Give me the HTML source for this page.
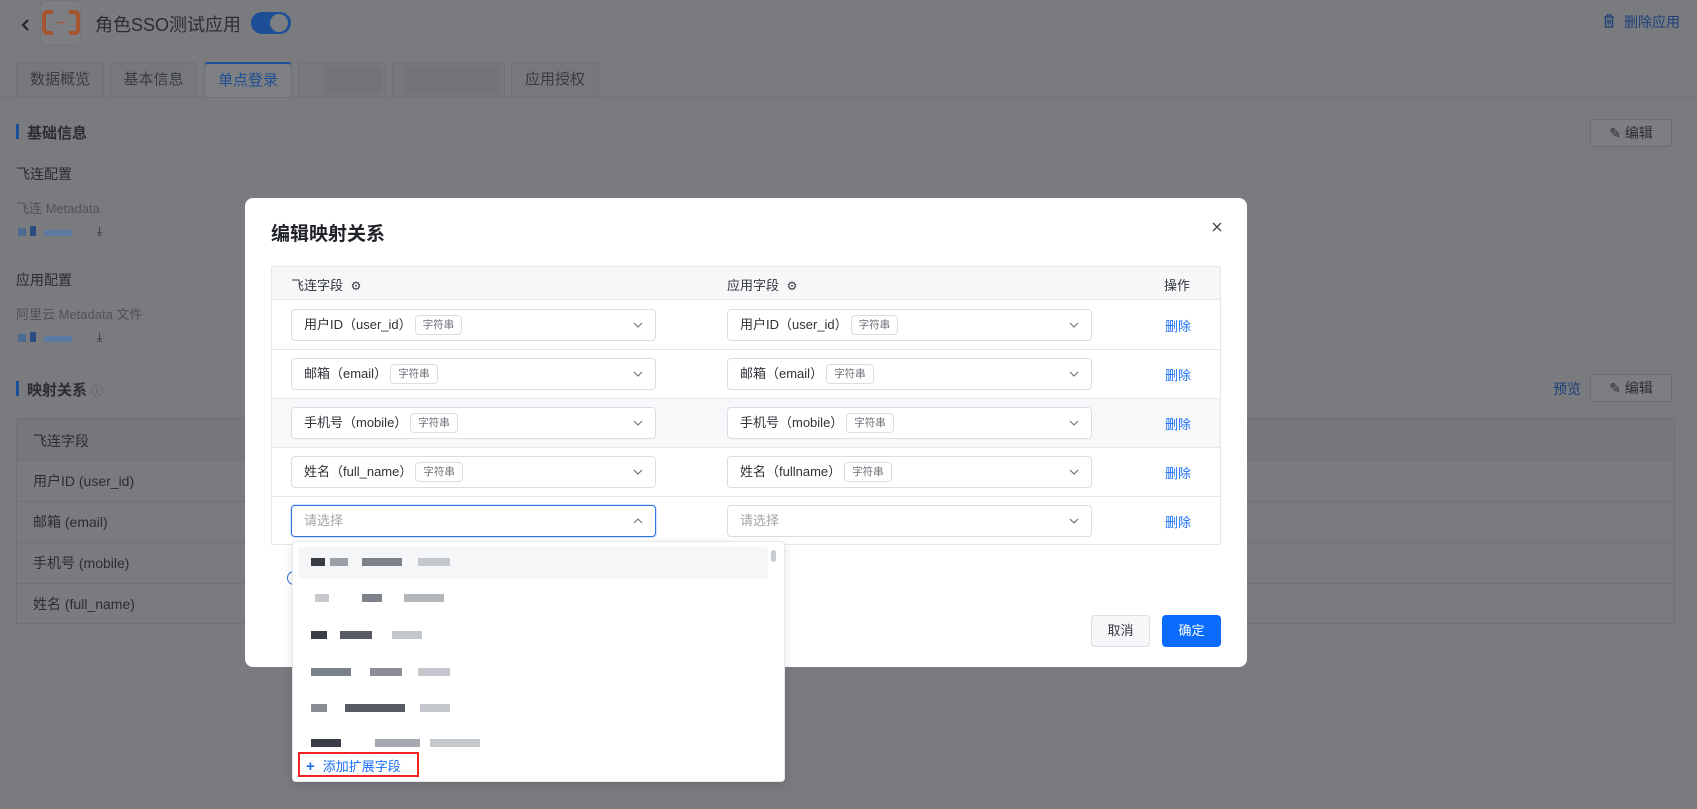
<!DOCTYPE html>
<html><head><meta charset="utf-8"><style>
*{box-sizing:border-box;margin:0;padding:0}
body{width:1697px;height:809px;position:relative;overflow:hidden;background:#797b7f;font-family:"Liberation Sans","Noto Sans CJK SC",sans-serif;color:#33363b}
.a{position:absolute}
.bg{color:#2b2d31}
.tab{position:absolute;top:62px;height:35px;border:1px solid #6f7175;border-bottom:none;border-radius:4px 4px 0 0;background:#76787c;font-size:15px;color:#3a3c40;text-align:center;line-height:34px}
.btnbg{position:absolute;border:1px solid #6a6c70;border-radius:3px;font-size:14px;color:#2b2d31;text-align:center;line-height:26px;background:#7c7e82}
.modal{position:absolute;left:245px;top:198px;width:1002px;height:469px;background:#fff;border-radius:8px}
.sel{position:absolute;height:32px;border:1px solid #dadde3;border-radius:4px;background:#fff;font-size:13px;color:#2f3237;padding-left:12px;line-height:30px}
.tag{display:inline-block;border:1px solid #dadde3;border-radius:4px;font-size:10.5px;color:#6b6f76;height:20px;line-height:18px;padding:0 7px;margin-left:3px;vertical-align:1px}
.sel svg{position:absolute;right:12px;top:11px}
.del{position:absolute;font-size:13px;color:#1a6ef5}
.ph{color:#a0a4aa}
.blk{position:absolute;height:8px;background:#9a9ea6}
.d{background:#3a3d45}
</style></head><body>
<svg class="a" style="left:21px;top:18px" width="10" height="14"><path d="M7 2 L2 7 L7 12" stroke="#222" stroke-width="2" fill="none"/></svg>
<div class="a" style="left:40px;top:0;width:41px;height:46px;border-radius:6px;background:#7c7e82;border:1px solid #727478"></div>
<svg class="a" style="left:42px;top:10px" width="38" height="25"><path d="M11 2 H6 Q2 2 2 6 V19 Q2 23 6 23 H11 M27 2 H32 Q36 2 36 6 V19 Q36 23 32 23 H27" stroke="#a4552f" stroke-width="4" fill="none"/><path d="M15 12.5 H23" stroke="#a4552f" stroke-width="1.5"/></svg>
<div class="a bg" style="left:95px;top:11px;font-size:18px">角色SSO测试应用</div>
<div class="a" style="left:251px;top:12px;width:40px;height:22px;border-radius:11px;background:#1d4f96"></div>
<div class="a" style="left:270px;top:14px;width:18px;height:18px;border-radius:9px;background:#7c7e82"></div>
<svg class="a" style="left:1603px;top:14px" width="12" height="14"><path d="M1 3 H11 M4 3 V1 H8 V3 M2.5 3 V13 H9.5 V3 M5 5.5 V10.5 M7 5.5 V10.5" stroke="#1d3f7a" stroke-width="1.3" fill="none"/></svg>
<div class="a" style="left:1624px;top:12px;font-size:14px;color:#1d3f7a">删除应用</div>
<div class="tab" style="left:16px;width:88px">数据概览</div>
<div class="tab" style="left:110px;width:87px">基本信息</div>
<div class="tab" style="left:204px;width:88px;background:#7d7f83;border-top:2px solid #1d4f96;color:#1d4f96;height:36px">单点登录</div>
<div class="tab" style="left:298px;width:88px"><div class="a" style="left:25px;top:3px;width:58px;height:28px;background:#727478"></div></div>
<div class="tab" style="left:392px;width:113px"><div class="a" style="left:12px;top:3px;width:95px;height:28px;background:#727478"></div></div>
<div class="tab" style="left:511px;width:88px">应用授权</div>
<div class="a" style="left:0;top:97px;width:1697px;height:1px;background:#6f7175"></div>

<div class="a" style="left:16px;top:124px;width:3px;height:15px;background:#1d4f96"></div>
<div class="a bg" style="left:27px;top:122px;font-size:15px;font-weight:bold">基础信息</div>
<div class="btnbg" style="left:1590px;top:119px;width:82px;height:28px">✎ 编辑</div>
<div class="a bg" style="left:16px;top:164px;font-size:14px">飞连配置</div>
<div class="a" style="left:16px;top:198px;font-size:13px;color:#505256">飞连 Metadata</div>
<div class="a" style="left:18px;top:228px;width:8px;height:8px;background:#4d6a93"></div><div class="a" style="left:30px;top:226px;width:6px;height:10px;background:#2b4c80"></div><div class="a" style="left:44px;top:230px;width:28px;height:6px;background:#5d7aa3"></div>
<div class="a" style="left:97px;top:224px;font-size:12px;color:#2b2d31">⤓</div>
<div class="a bg" style="left:16px;top:270px;font-size:14px">应用配置</div>
<div class="a" style="left:16px;top:304px;font-size:13px;color:#505256">阿里云 Metadata 文件</div>
<div class="a" style="left:18px;top:334px;width:8px;height:8px;background:#4d6a93"></div><div class="a" style="left:30px;top:332px;width:6px;height:10px;background:#2b4c80"></div><div class="a" style="left:44px;top:336px;width:28px;height:6px;background:#5d7aa3"></div>
<div class="a" style="left:97px;top:330px;font-size:12px;color:#2b2d31">⤓</div>

<div class="a" style="left:16px;top:381px;width:3px;height:15px;background:#1d4f96"></div>
<div class="a bg" style="left:27px;top:379px;font-size:15px;font-weight:bold">映射关系 <span style="font-size:12px;color:#505256;font-weight:normal">ⓘ</span></div>
<div class="a" style="left:1553px;top:379px;font-size:14px;color:#1d3f7a">预览</div>
<div class="btnbg" style="left:1590px;top:374px;width:82px;height:28px">✎ 编辑</div>
<div class="a" style="left:16px;top:418px;width:1659px;height:206px;border:1px solid #6f7175"></div>
<div class="a" style="left:17px;top:419px;width:1657px;height:41px;background:#75777b"></div>
<div class="a" style="left:17px;top:460px;width:1657px;height:1px;background:#6f7175"></div>
<div class="a" style="left:17px;top:501px;width:1657px;height:1px;background:#6f7175"></div>
<div class="a" style="left:17px;top:542px;width:1657px;height:1px;background:#6f7175"></div>
<div class="a" style="left:17px;top:583px;width:1657px;height:1px;background:#6f7175"></div>
<div class="a bg" style="left:33px;top:431px;font-size:14px">飞连字段</div>
<div class="a bg" style="left:33px;top:471px;font-size:14px">用户ID (user_id)</div>
<div class="a bg" style="left:33px;top:512px;font-size:14px">邮箱 (email)</div>
<div class="a bg" style="left:33px;top:553px;font-size:14px">手机号 (mobile)</div>
<div class="a bg" style="left:33px;top:594px;font-size:14px">姓名 (full_name)</div>

<div class="modal">
<div class="a" style="left:26px;top:21px;font-size:19px;color:#1f2226;font-weight:bold">编辑映射关系</div>
<svg class="a" style="left:967px;top:24px" width="10" height="10"><path d="M1 1 L9 9 M9 1 L1 9" stroke="#444" stroke-width="1.3"/></svg>
<div class="a" style="left:26px;top:68px;width:950px;height:279px;border:1px solid #e6e8ec"></div>
<div class="a" style="left:27px;top:69px;width:948px;height:33px;background:#f6f7f9;border-bottom:1px solid #e6e8ec"></div>
<div class="a" style="left:46px;top:77px;font-size:13px;color:#33363b">飞连字段 <span style="font-size:12px;margin-left:4px">⚙</span></div>
<div class="a" style="left:482px;top:77px;font-size:13px;color:#33363b">应用字段 <span style="font-size:12px;margin-left:4px">⚙</span></div>
<div class="a" style="left:919px;top:77px;font-size:13px;color:#33363b">操作</div>
<div class="a" style="left:27px;top:151px;width:948px;height:1px;background:#e6e8ec"></div>
<div class="a" style="left:27px;top:200px;width:948px;height:50px;background:#f7f8fa;border-top:1px solid #e6e8ec;border-bottom:1px solid #e6e8ec"></div>
<div class="a" style="left:27px;top:298px;width:948px;height:1px;background:#e6e8ec"></div>
</div>

<div class="sel" style="left:291px;top:309px;width:365px">用户ID（user_id）<span class="tag">字符串</span><svg width="10" height="8"><path d="M1 2 L5 6 L9 2" stroke="#666" fill="none"/></svg></div>
<div class="sel" style="left:727px;top:309px;width:365px">用户ID（user_id）<span class="tag">字符串</span><svg width="10" height="8"><path d="M1 2 L5 6 L9 2" stroke="#666" fill="none"/></svg></div>
<div class="del" style="left:1165px;top:316px">删除</div>
<div class="sel" style="left:291px;top:358px;width:365px">邮箱（email）<span class="tag">字符串</span><svg width="10" height="8"><path d="M1 2 L5 6 L9 2" stroke="#666" fill="none"/></svg></div>
<div class="sel" style="left:727px;top:358px;width:365px">邮箱（email）<span class="tag">字符串</span><svg width="10" height="8"><path d="M1 2 L5 6 L9 2" stroke="#666" fill="none"/></svg></div>
<div class="del" style="left:1165px;top:365px">删除</div>
<div class="sel" style="left:291px;top:407px;width:365px">手机号（mobile）<span class="tag">字符串</span><svg width="10" height="8"><path d="M1 2 L5 6 L9 2" stroke="#666" fill="none"/></svg></div>
<div class="sel" style="left:727px;top:407px;width:365px">手机号（mobile）<span class="tag">字符串</span><svg width="10" height="8"><path d="M1 2 L5 6 L9 2" stroke="#666" fill="none"/></svg></div>
<div class="del" style="left:1165px;top:414px">删除</div>
<div class="sel" style="left:291px;top:456px;width:365px">姓名（full_name）<span class="tag">字符串</span><svg width="10" height="8"><path d="M1 2 L5 6 L9 2" stroke="#666" fill="none"/></svg></div>
<div class="sel" style="left:727px;top:456px;width:365px">姓名（fullname）<span class="tag">字符串</span><svg width="10" height="8"><path d="M1 2 L5 6 L9 2" stroke="#666" fill="none"/></svg></div>
<div class="del" style="left:1165px;top:463px">删除</div>
<div class="sel" style="left:291px;top:505px;width:365px;border-color:#2f74e8;box-shadow:0 0 0 1px #d6e4fb"><span class="ph">请选择</span><svg width="10" height="8"><path d="M1 6 L5 2 L9 6" stroke="#666" fill="none"/></svg></div>
<div class="sel" style="left:727px;top:505px;width:365px"><span class="ph">请选择</span><svg width="10" height="8"><path d="M1 2 L5 6 L9 2" stroke="#666" fill="none"/></svg></div>
<div class="del" style="left:1165px;top:512px">删除</div>
<div class="a" style="left:287px;top:571px;width:8px;height:14px;border:1.5px solid #2f74e8;border-right:none;border-radius:8px 0 0 8px"></div>

<div class="a" style="left:1091px;top:615px;width:59px;height:32px;border:1px solid #dadde3;border-radius:4px;background:#f6f7f9;font-size:13px;text-align:center;line-height:30px;color:#33363b">取消</div>
<div class="a" style="left:1162px;top:615px;width:59px;height:32px;border-radius:4px;background:#0a6cff;font-size:13px;text-align:center;line-height:32px;color:#fff">确定</div>

<div class="a" style="left:292px;top:541px;width:493px;height:241px;background:#fff;border:1px solid #e6e8ec;border-radius:4px;box-shadow:0 3px 10px rgba(0,0,0,.12)">
<div class="a" style="left:5px;top:5px;width:470px;height:32px;background:#f5f6f8;border-radius:4px"></div>
<div class="a" style="left:478px;top:8px;width:5px;height:12px;border-radius:3px;background:#c9ccd1"></div>
</div>
<div class="blk d" style="left:311px;top:558px;width:14px"></div><div class="blk" style="left:330px;top:558px;width:18px"></div><div class="blk" style="left:362px;top:558px;width:40px;background:#7d8189"></div><div class="blk" style="left:418px;top:558px;width:32px;background:#c4c7cc"></div>
<div class="blk" style="left:315px;top:594px;width:14px;background:#c7c9cd"></div><div class="blk" style="left:362px;top:594px;width:20px;background:#7d8189"></div><div class="blk" style="left:404px;top:594px;width:40px;background:#b3b6bb"></div>
<div class="blk d" style="left:311px;top:631px;width:16px"></div><div class="blk" style="left:340px;top:631px;width:32px;background:#575a62"></div><div class="blk" style="left:392px;top:631px;width:30px;background:#c4c7cc"></div>
<div class="blk" style="left:311px;top:668px;width:40px;background:#7d8189"></div><div class="blk" style="left:370px;top:668px;width:32px;background:#8a8d94"></div><div class="blk" style="left:418px;top:668px;width:32px;background:#c4c7cc"></div>
<div class="blk" style="left:311px;top:704px;width:16px;background:#8a8d94"></div><div class="blk" style="left:345px;top:704px;width:60px;background:#575a62"></div><div class="blk" style="left:420px;top:704px;width:30px;background:#c4c7cc"></div>
<div class="blk d" style="left:311px;top:739px;width:30px"></div><div class="blk" style="left:375px;top:739px;width:45px;background:#a6a9af"></div><div class="blk" style="left:430px;top:739px;width:50px;background:#c4c7cc"></div>
<div class="a" style="left:298px;top:752px;width:121px;height:25px;border:2px solid #f02222"></div>
<div class="a" style="left:306px;top:756px;font-size:13px;color:#1a6ef5"><b style="font-size:15px;margin-right:8px">+</b>添加扩展字段</div>
</body></html>
